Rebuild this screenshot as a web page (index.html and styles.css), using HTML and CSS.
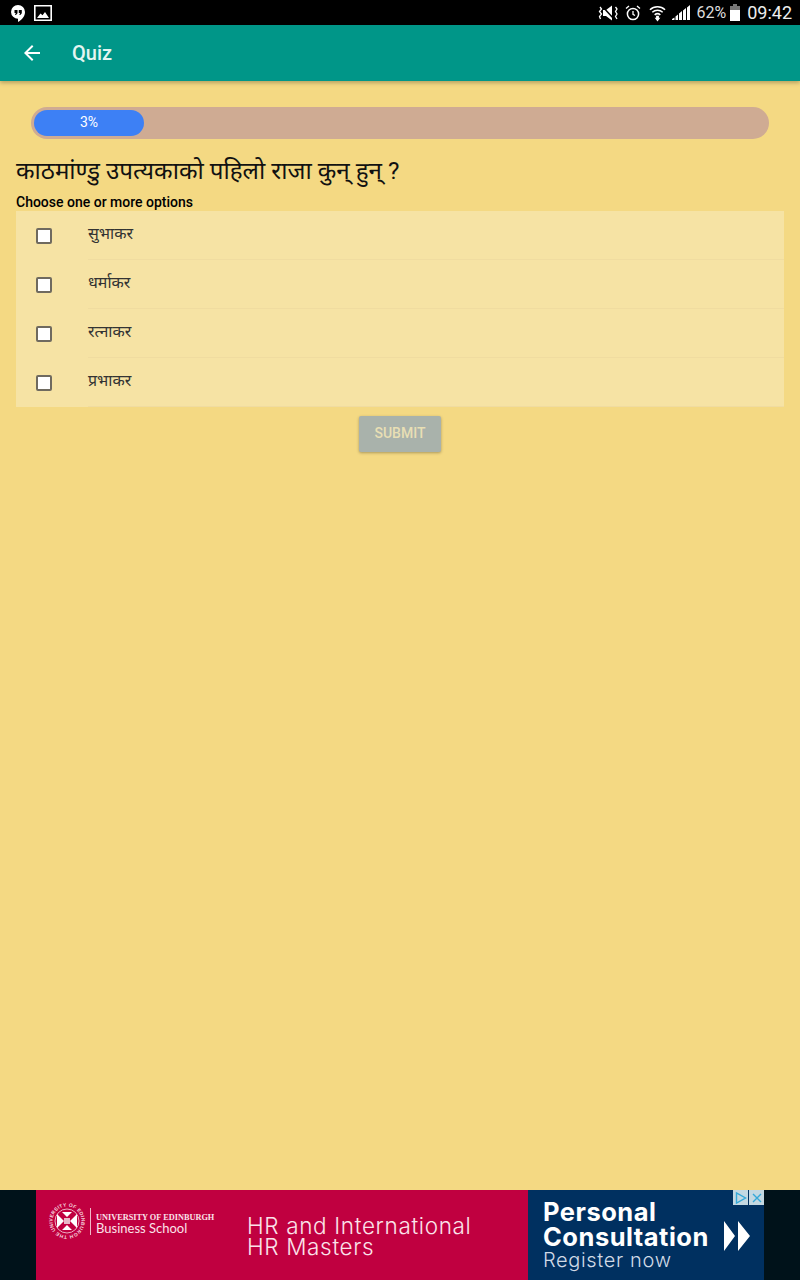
FILE: index.html
```html
<!DOCTYPE html>
<html lang="ne">
<head>
  <meta charset="UTF-8">
  <meta name="viewport" content="width=device-width, initial-scale=1.0">
  <title>Quiz</title>
  <link rel="stylesheet" href="styles.css">
</head>
<body>

<div class="statusbar">
  <div class="status-left">
    <svg class="ico" width="16" height="18" viewBox="0 0 16 18"><path fill="#fff" d="M8 1a7 7 0 0 0-7 7 7 7 0 0 0 7 6.800V18c3.500-1.800 7-5.400 7-10a7 7 0 0 0-7-7z"/><path fill="#000" d="M4.500 6h3v3.200L6 11H5l.8-2H4.500zM8.800 6h3v3.200L10.300 11h-1l.8-2H8.800z"/></svg>
    <svg class="ico" width="18" height="16" viewBox="0 0 18 16"><path fill="none" stroke="#fff" stroke-width="1.600" d="M.8.800h16.400v14.400H.8z"/><path fill="#fff" d="M3 13l3.500-4.500 2 1.800L11 7l4 6z"/></svg>
  </div>
  <div class="status-right">
    <svg class="ico mute" width="22" height="16" viewBox="0 0 22 16"><path fill="#fff" d="M6 5h3l6-4.500v15L9 11H6z"/><path fill="none" stroke="#000" stroke-width="1.500" d="M5 1l12 13"/><path fill="none" stroke="#fff" stroke-width="1.300" d="M3 2l1.500 2-2 2.500 2 2.500-2 2.500L3.500 14M18.500 2L20 4l-1.500 2.500L20 9l-1.500 2.500L20 14"/></svg>
    <svg class="ico alarm" width="16" height="16" viewBox="0 0 16 16"><circle cx="8" cy="9" r="5.600" fill="none" stroke="#fff" stroke-width="1.500"/><path fill="none" stroke="#fff" stroke-width="1.300" d="M8 6v3.300l2 1.200M1 3.500L4 1M15 3.500L12 1"/></svg>
    <svg class="ico wifi" width="17" height="20" viewBox="0 0 18 20"><path fill="none" stroke="#fff" stroke-width="1.600" d="M1 6.500a11.500 11.500 0 0 1 16 0M3.500 9.200a8 8 0 0 1 11 0M6 12a4.500 4.500 0 0 1 6 0"/><path fill="#fff" d="M7.500 13h3v2h1.500L9 19l-3-4h1.500z"/></svg>
    <svg class="ico signal" width="18" height="16" viewBox="0 0 18 16"><path fill="#fff" d="M0 15h2.500v-2.500L0 14zM3.500 15H6V9.500L3.500 11.500zM7 15h3V6L7 8.500zM11 15h3V3L11 5.500zM15 15h3V0l-3 2.500z"/></svg>
    <span class="batt-text">62%</span>
    <svg class="ico batt" width="10" height="17" viewBox="0 0 10 17"><path fill="#777" d="M3 0h4v2h3v5H0V2h3z"/><path fill="#fff" d="M0 6h10v11H0z"/></svg>
    <span class="clock">09:42</span>
  </div>
</div>

<div class="appbar">
  <svg class="back" width="16" height="16" viewBox="0 0 16 16"><path fill="#fff" d="M16 7H3.800l5.600-5.600L8 0 0 8l8 8 1.400-1.400L3.800 9H16z"/></svg>
  <span class="appbar-title">Quiz</span>
</div>

<div class="content">
  <div class="progress">
    <div class="progress-fill">3%</div>
  </div>

  <h2 class="question">काठमांण्डु उपत्यकाको पहिलो राजा कुन् हुन् ?</h2>
  <p class="hint">Choose one or more options</p>

  <div class="options">
    <div class="option">
      <span class="check"></span>
      <span class="option-text">सुभाकर</span>
    </div>
    <div class="option">
      <span class="check"></span>
      <span class="option-text">धर्माकर</span>
    </div>
    <div class="option">
      <span class="check"></span>
      <span class="option-text">रत्नाकर</span>
    </div>
    <div class="option">
      <span class="check"></span>
      <span class="option-text">प्रभाकर</span>
    </div>
  </div>

  <button class="submit">SUBMIT</button>
</div>

<div class="ad">
  <div class="ad-red">
    <div class="ad-logo">
      <svg class="crest" width="36" height="38" viewBox="0 0 36 38">
        <defs><path id="ring" d="M18 33.500a14.500 14.500 0 1 1 .01 0"/></defs>
        <text class="crest-text"><textPath href="#ring" textLength="88">THE UNIVERSITY OF EDINBURGH</textPath></text>
        <circle cx="18" cy="19" r="12" fill="none" stroke="#f6d5df" stroke-width=".8"/>
        <path fill="#fff" d="M8 12l7 7-7 7zM28 12l-7 7 7 7zM13 10h10l-5 5zM13 28h10l-5-5z"/>
        <rect x="15" y="16" width="6" height="6" fill="#e8b8c8"/>
      </svg>
      <div class="ad-logo-text">
        <div class="ad-uni">UNIVERSITY OF EDINBURGH</div>
        <div class="ad-school">Business School</div>
      </div>
    </div>
    <div class="ad-hr">HR and International<br>HR Masters</div>
  </div>
  <div class="ad-blue">
    <div class="ad-cta">
      <div class="ad-big">Personal<br>Consultation</div>
      <div class="ad-reg">Register now</div>
    </div>
    <svg class="ad-arrows" width="26" height="30" viewBox="0 0 26 30"><path fill="#fff" d="M0 0l11 15L0 30zM14 0l12 15-12 15z"/></svg>
    <div class="ad-choices">
      <span class="ad-choice"><svg width="14" height="14" viewBox="0 0 14 14"><path fill="none" stroke="#35a8d8" stroke-width="1.400" d="M2.500 2v10l9-5z"/></svg></span>
      <span class="ad-choice"><svg width="14" height="14" viewBox="0 0 14 14"><path fill="none" stroke="#35a8d8" stroke-width="1.400" d="M3 3l8 8M11 3l-8 8"/></svg></span>
    </div>
  </div>
</div>

</body>
</html>
```
FILE: styles.css
```css
* {
  box-sizing: border-box;
}
body {
  margin: 0;
  width: 800px;
  height: 1280px;
  overflow: hidden;
  display: flex;
  flex-direction: column;
  background-color: #f4d983;
  font-family: Roboto, "Noto Sans", "Noto Sans Devanagari", sans-serif;
}
.ico {
  display: block;
}

/* status bar */
.statusbar {
  height: 25px;
  flex: none;
  background-color: #000;
  color: #fff;
  display: flex;
  justify-content: space-between;
  align-items: center;
  padding: 0 8px 0 10px;
}
.status-left {
  display: flex;
  align-items: center;
  gap: 8px;
}
.status-right {
  display: flex;
  align-items: center;
}
.alarm {
  margin-left: 6px;
}
.wifi {
  margin-left: 8px;
}
.signal {
  margin-left: 6px;
}
.batt-text {
  margin-left: 6px;
  font-size: 16px;
  color: #ddd;
}
.batt {
  margin-left: 4px;
}
.clock {
  margin-left: 7px;
  font-size: 18px;
  color: #eee;
}

/* app bar */
.appbar {
  height: 56px;
  flex: none;
  background-color: #009688;
  box-shadow: 0 2px 4px rgba(0,0,0,0.25);
  display: flex;
  align-items: center;
  padding-left: 24px;
}
.back {
  margin-right: 32px;
}
.appbar-title {
  color: #e4f5f1;
  font-size: 20px;
  font-weight: 500;
}

/* quiz */
.content {
  flex: 1;
  padding: 26px 16px 0;
  display: flex;
  flex-direction: column;
}
.progress {
  margin: 0 15px;
  height: 32px;
  padding: 3px;
  background-color: #cfab93;
  border-radius: 16px;
}
.progress-fill {
  width: 110px;
  height: 26px;
  background-color: #3d80f5;
  border-radius: 13px;
  color: #fff;
  font-size: 14px;
  line-height: 24px;
  text-align: center;
}
.question {
  margin: 15px 0 0;
  font-size: 24.2px;
  font-weight: normal;
  line-height: 34px;
  color: #111;
}
.hint {
  margin: 5px 0 0;
  font-size: 14px;
  font-weight: 500;
  line-height: 18px;
  color: #000;
}
.options {
  background-color: #f6e3a4;
}
.option {
  height: 49px;
  display: flex;
  align-items: flex-start;
}
.check {
  flex: none;
  width: 16px;
  height: 16px;
  margin: 17px 36px 0 20px;
  background-color: #fff;
  border: 2px solid #6f6a5f;
  border-radius: 2px;
}
.option-text {
  flex: 1;
  height: 49px;
  padding-top: 12px;
  font-size: 16px;
  line-height: 22px;
  color: #333;
  border-bottom: 1px solid #f0dca0;
}
.submit {
  align-self: center;
  width: 82px;
  height: 36px;
  margin-top: 9px;
  padding: 0 0 2px;
  background-color: #a9b2ab;
  color: #e8dfb4;
  border: 0;
  border-radius: 2px;
  font-family: Roboto, sans-serif;
  font-size: 14px;
  font-weight: 500;
  box-shadow: 0 1px 3px rgba(0,0,0,0.3);
}

/* ad banner */
.ad {
  height: 90px;
  flex: none;
  background-color: #00121a;
  display: flex;
  justify-content: center;
}
.ad-red {
  width: 492px;
  background-color: #c00040;
  color: #fbe3ea;
  position: relative;
}
.ad-logo {
  display: flex;
  align-items: center;
  padding: 12px 0 0 13px;
}
.crest {
  overflow: visible;
}
.crest-text {
  font-family: "Liberation Sans", sans-serif;
  font-size: 5px;
  font-weight: 700;
  fill: #f6d5df;
}
.ad-logo-text {
  margin-left: 5px;
  padding: 6px 0 0 5px;
  border-left: 1px solid #f0b8c8;
}
.ad-uni {
  font-family: "Liberation Serif", serif;
  font-size: 8.300px;
  font-weight: 700;
  line-height: 8px;
}
.ad-school {
  font-family: Lato, sans-serif;
  font-size: 13px;
  line-height: 13px;
}
.ad-hr {
  position: absolute;
  left: 211px;
  top: 25px;
  font-family: Inter, sans-serif;
  font-size: 22.500px;
  font-weight: 300;
  letter-spacing: 0.65px;
  line-height: 21px;
}
.ad-blue {
  width: 236px;
  background-color: #003060;
  position: relative;
  display: flex;
  align-items: center;
  padding-left: 15px;
}
.ad-big {
  padding-top: 1px;
  font-family: Inter, sans-serif;
  font-size: 25.500px;
  font-weight: 700;
  letter-spacing: 0.5px;
  line-height: 25px;
  color: #fff;
}
.ad-reg {
  font-family: Inter, sans-serif;
  font-size: 20px;
  font-weight: 300;
  letter-spacing: 0.65px;
  line-height: 23px;
  color: #d0dae6;
}
.ad-arrows {
  margin: 2px 0 0 15px;
}
.ad-choices {
  position: absolute;
  top: 0;
  right: 0;
  display: flex;
  gap: 1px;
}
.ad-choice {
  width: 15px;
  height: 15px;
  background-color: #c4d8e2;
  display: flex;
  align-items: center;
  justify-content: center;
}
```
